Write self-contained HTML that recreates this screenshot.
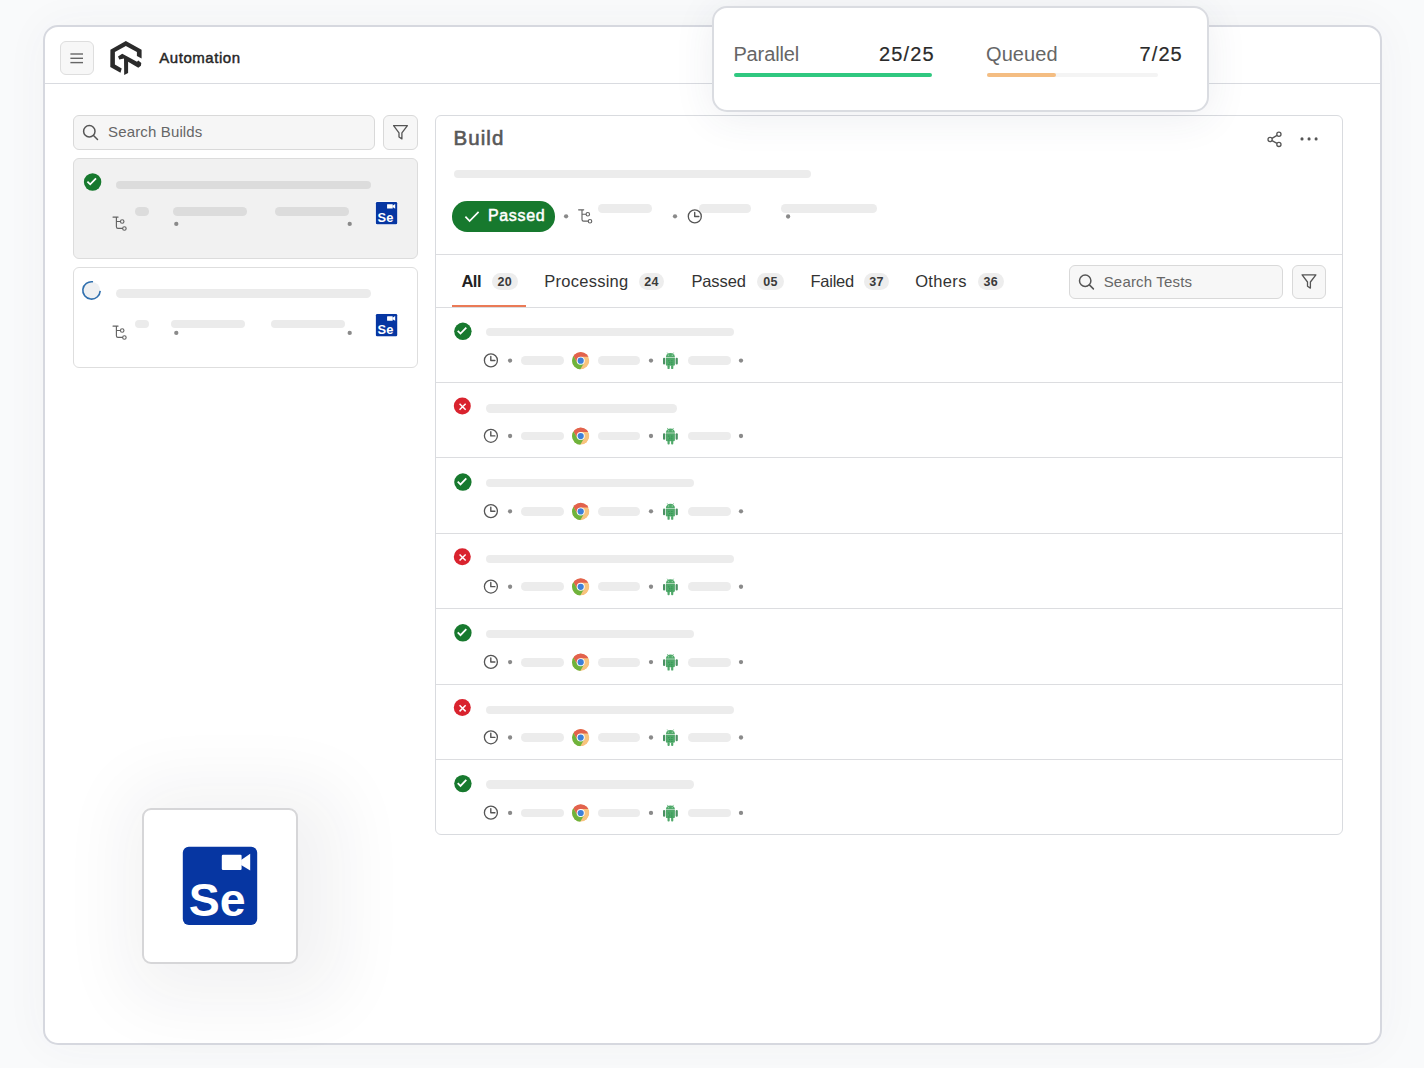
<!DOCTYPE html>
<html><head><meta charset="utf-8"><title>Automation</title>
<style>
html,body{margin:0;padding:0}
body{width:1424px;height:1068px;overflow:hidden;position:relative;background:#f9fafb;font-family:"Liberation Sans", sans-serif}
.b{position:absolute}
.t{position:absolute;white-space:nowrap;line-height:1}
svg.ov{position:absolute;left:0;top:0;width:1424px;height:1068px;pointer-events:none}
</style></head><body>
<div class="b" style="left:43.00px;top:25.00px;width:1339.00px;height:1020.00px;box-sizing:border-box;background:#fff;border:2px solid #d6d8df;border-radius:15px;box-shadow:0 0 45px rgba(60,70,100,0.045)"></div>
<div class="b" style="left:45.00px;top:83.00px;width:1335.00px;height:1.00px;background:#d9dbe0"></div>
<div class="b" style="left:60.00px;top:41.00px;width:33.80px;height:34.00px;box-sizing:border-box;background:#f7f7f7;border:1px solid #dedede;border-radius:6px"></div>
<div class="t" style="left:159.20px;top:50.40px;font-size:15px;font-weight:400;color:#262626;letter-spacing:0.56px;-webkit-text-stroke:0.45px #262626">Automation</div>
<div class="b" style="left:73.00px;top:115.00px;width:301.50px;height:34.60px;box-sizing:border-box;background:#f6f6f6;border:1px solid #d9d9d9;border-radius:6px"></div>
<div class="t" style="left:108.00px;top:124.20px;font-size:15px;font-weight:400;color:#666;letter-spacing:0.15px;">Search Builds</div>
<div class="b" style="left:383.00px;top:115.00px;width:34.50px;height:34.60px;box-sizing:border-box;background:#f7f7f7;border:1px solid #d9d9d9;border-radius:6px"></div>
<div class="b" style="left:73.00px;top:158.00px;width:344.50px;height:100.60px;box-sizing:border-box;background:#f1f1f1;border:1px solid #dcdcdc;border-radius:6px"></div>
<div class="b" style="left:115.60px;top:180.90px;width:255.00px;height:8.40px;background:#dcdcdc;border-radius:4.20px"></div>
<div class="b" style="left:135.00px;top:207.00px;width:14.30px;height:8.50px;background:#dcdcdc;border-radius:4.25px"></div>
<div class="b" style="left:172.90px;top:207.00px;width:74.20px;height:8.50px;background:#dcdcdc;border-radius:4.25px"></div>
<div class="b" style="left:274.90px;top:207.00px;width:74.10px;height:8.50px;background:#dcdcdc;border-radius:4.25px"></div>
<div class="b" style="left:73.00px;top:267.00px;width:344.50px;height:100.60px;box-sizing:border-box;background:#fff;border:1px solid #dedede;border-radius:6px"></div>
<div class="b" style="left:115.60px;top:289.30px;width:255.00px;height:8.70px;background:#ebebeb;border-radius:4.35px"></div>
<div class="b" style="left:134.70px;top:320.00px;width:14.60px;height:8.40px;background:#ebebeb;border-radius:4.20px"></div>
<div class="b" style="left:170.70px;top:320.00px;width:74.40px;height:8.40px;background:#ebebeb;border-radius:4.20px"></div>
<div class="b" style="left:271.20px;top:320.00px;width:73.60px;height:8.40px;background:#ebebeb;border-radius:4.20px"></div>
<div class="b" style="left:435.00px;top:115.00px;width:908.00px;height:720.00px;box-sizing:border-box;background:#fff;border:1px solid #d9dbdf;border-radius:6px"></div>
<div class="t" style="left:453.40px;top:128.05px;font-size:20.5px;font-weight:400;color:#585858;letter-spacing:1.08px;-webkit-text-stroke:0.6px #585858">Build</div>
<div class="b" style="left:453.60px;top:169.90px;width:357.00px;height:8.00px;background:#ececec;border-radius:4.00px"></div>
<div class="b" style="left:451.90px;top:201.30px;width:103.20px;height:30.30px;background:#17792e;border-radius:15.2px"></div>
<div class="t" style="left:487.90px;top:207.56px;font-size:16px;font-weight:400;color:#fff;letter-spacing:0.69px;-webkit-text-stroke:0.5px #fff">Passed</div>
<div class="b" style="left:597.90px;top:204.20px;width:53.70px;height:8.60px;background:#ececec;border-radius:4.30px"></div>
<div class="b" style="left:698.60px;top:204.20px;width:52.40px;height:8.60px;background:#ececec;border-radius:4.30px"></div>
<div class="b" style="left:781.10px;top:204.20px;width:95.90px;height:8.60px;background:#ececec;border-radius:4.30px"></div>
<div class="b" style="left:436.30px;top:254.20px;width:906.00px;height:1.00px;background:#dcdde0"></div>
<div class="t" style="left:461.40px;top:273.13px;font-size:16.5px;font-weight:700;color:#222;letter-spacing:-0.497px;">All</div>
<div class="b" style="left:491.50px;top:272.80px;width:26.40px;height:17.20px;background:#ededed;border-radius:8.6px"></div>
<div class="t" style="left:491.50px;top:272.8px;width:26.40px;height:17.2px;line-height:18.4px;text-align:center;font-size:12.5px;font-weight:700;color:#3a3a3a;letter-spacing:0.3px">20</div>
<div class="t" style="left:544.20px;top:273.13px;font-size:16.5px;font-weight:400;color:#333;letter-spacing:0.268px;">Processing</div>
<div class="b" style="left:638.60px;top:272.80px;width:25.90px;height:17.20px;background:#ededed;border-radius:8.6px"></div>
<div class="t" style="left:638.60px;top:272.8px;width:25.90px;height:17.2px;line-height:18.4px;text-align:center;font-size:12.5px;font-weight:700;color:#3a3a3a;letter-spacing:0.3px">24</div>
<div class="t" style="left:691.40px;top:273.13px;font-size:16.5px;font-weight:400;color:#333;letter-spacing:-0.108px;">Passed</div>
<div class="b" style="left:757.30px;top:272.80px;width:26.60px;height:17.20px;background:#ededed;border-radius:8.6px"></div>
<div class="t" style="left:757.30px;top:272.8px;width:26.60px;height:17.2px;line-height:18.4px;text-align:center;font-size:12.5px;font-weight:700;color:#3a3a3a;letter-spacing:0.3px">05</div>
<div class="t" style="left:810.40px;top:273.13px;font-size:16.5px;font-weight:400;color:#333;letter-spacing:-0.225px;">Failed</div>
<div class="b" style="left:864.40px;top:272.80px;width:24.20px;height:17.20px;background:#ededed;border-radius:8.6px"></div>
<div class="t" style="left:864.40px;top:272.8px;width:24.20px;height:17.2px;line-height:18.4px;text-align:center;font-size:12.5px;font-weight:700;color:#3a3a3a;letter-spacing:0.3px">37</div>
<div class="t" style="left:915.20px;top:273.13px;font-size:16.5px;font-weight:400;color:#333;letter-spacing:0.345px;">Others</div>
<div class="b" style="left:977.50px;top:272.80px;width:26.40px;height:17.20px;background:#ededed;border-radius:8.6px"></div>
<div class="t" style="left:977.50px;top:272.8px;width:26.40px;height:17.2px;line-height:18.4px;text-align:center;font-size:12.5px;font-weight:700;color:#3a3a3a;letter-spacing:0.3px">36</div>
<div class="b" style="left:451.90px;top:305.00px;width:74.60px;height:2.00px;background:#ea7a56"></div>
<div class="b" style="left:436.30px;top:306.80px;width:906.00px;height:1.00px;background:#dcdde0"></div>
<div class="b" style="left:1069.00px;top:264.50px;width:213.50px;height:34.40px;box-sizing:border-box;background:#f7f7f7;border:1px solid #d9d9d9;border-radius:6px"></div>
<div class="t" style="left:1103.70px;top:273.70px;font-size:15px;font-weight:400;color:#666;letter-spacing:0.18px;">Search Tests</div>
<div class="b" style="left:1292.00px;top:264.50px;width:34.00px;height:34.40px;box-sizing:border-box;background:#f7f7f7;border:1px solid #d9d9d9;border-radius:6px"></div>
<div class="b" style="left:485.80px;top:328.00px;width:248.20px;height:8.40px;background:#ececec;border-radius:4.20px"></div>
<div class="b" style="left:521.00px;top:356.30px;width:42.80px;height:8.70px;background:#ececec;border-radius:4.35px"></div>
<div class="b" style="left:597.90px;top:356.30px;width:42.40px;height:8.70px;background:#ececec;border-radius:4.35px"></div>
<div class="b" style="left:688.10px;top:356.30px;width:42.50px;height:8.70px;background:#ececec;border-radius:4.35px"></div>
<div class="b" style="left:436.30px;top:382.08px;width:906.00px;height:1.00px;background:#dcdde0"></div>
<div class="b" style="left:485.80px;top:404.18px;width:191.20px;height:8.40px;background:#ececec;border-radius:4.20px"></div>
<div class="b" style="left:521.00px;top:431.68px;width:42.80px;height:8.70px;background:#ececec;border-radius:4.35px"></div>
<div class="b" style="left:597.90px;top:431.68px;width:42.40px;height:8.70px;background:#ececec;border-radius:4.35px"></div>
<div class="b" style="left:688.10px;top:431.68px;width:42.50px;height:8.70px;background:#ececec;border-radius:4.35px"></div>
<div class="b" style="left:436.30px;top:457.46px;width:906.00px;height:1.00px;background:#dcdde0"></div>
<div class="b" style="left:485.80px;top:478.76px;width:208.20px;height:8.40px;background:#ececec;border-radius:4.20px"></div>
<div class="b" style="left:521.00px;top:507.06px;width:42.80px;height:8.70px;background:#ececec;border-radius:4.35px"></div>
<div class="b" style="left:597.90px;top:507.06px;width:42.40px;height:8.70px;background:#ececec;border-radius:4.35px"></div>
<div class="b" style="left:688.10px;top:507.06px;width:42.50px;height:8.70px;background:#ececec;border-radius:4.35px"></div>
<div class="b" style="left:436.30px;top:532.84px;width:906.00px;height:1.00px;background:#dcdde0"></div>
<div class="b" style="left:485.80px;top:554.94px;width:248.20px;height:8.40px;background:#ececec;border-radius:4.20px"></div>
<div class="b" style="left:521.00px;top:582.44px;width:42.80px;height:8.70px;background:#ececec;border-radius:4.35px"></div>
<div class="b" style="left:597.90px;top:582.44px;width:42.40px;height:8.70px;background:#ececec;border-radius:4.35px"></div>
<div class="b" style="left:688.10px;top:582.44px;width:42.50px;height:8.70px;background:#ececec;border-radius:4.35px"></div>
<div class="b" style="left:436.30px;top:608.22px;width:906.00px;height:1.00px;background:#dcdde0"></div>
<div class="b" style="left:485.80px;top:629.52px;width:208.20px;height:8.40px;background:#ececec;border-radius:4.20px"></div>
<div class="b" style="left:521.00px;top:657.82px;width:42.80px;height:8.70px;background:#ececec;border-radius:4.35px"></div>
<div class="b" style="left:597.90px;top:657.82px;width:42.40px;height:8.70px;background:#ececec;border-radius:4.35px"></div>
<div class="b" style="left:688.10px;top:657.82px;width:42.50px;height:8.70px;background:#ececec;border-radius:4.35px"></div>
<div class="b" style="left:436.30px;top:683.60px;width:906.00px;height:1.00px;background:#dcdde0"></div>
<div class="b" style="left:485.80px;top:705.70px;width:248.20px;height:8.40px;background:#ececec;border-radius:4.20px"></div>
<div class="b" style="left:521.00px;top:733.20px;width:42.80px;height:8.70px;background:#ececec;border-radius:4.35px"></div>
<div class="b" style="left:597.90px;top:733.20px;width:42.40px;height:8.70px;background:#ececec;border-radius:4.35px"></div>
<div class="b" style="left:688.10px;top:733.20px;width:42.50px;height:8.70px;background:#ececec;border-radius:4.35px"></div>
<div class="b" style="left:436.30px;top:758.98px;width:906.00px;height:1.00px;background:#dcdde0"></div>
<div class="b" style="left:485.80px;top:780.28px;width:208.20px;height:8.40px;background:#ececec;border-radius:4.20px"></div>
<div class="b" style="left:521.00px;top:808.58px;width:42.80px;height:8.70px;background:#ececec;border-radius:4.35px"></div>
<div class="b" style="left:597.90px;top:808.58px;width:42.40px;height:8.70px;background:#ececec;border-radius:4.35px"></div>
<div class="b" style="left:688.10px;top:808.58px;width:42.50px;height:8.70px;background:#ececec;border-radius:4.35px"></div>
<div class="b" style="left:142.00px;top:808.00px;width:156.00px;height:156.00px;box-sizing:border-box;background:#fff;border:2px solid #d6d6d8;border-radius:9px;box-shadow:14px 8px 70px 30px rgba(30,35,50,0.06)"></div>
<div class="b" style="left:712.00px;top:6.00px;width:497.00px;height:106.00px;box-sizing:border-box;background:#fff;border:2px solid #dadce1;border-radius:15px;box-shadow:0 6px 40px rgba(50,60,90,0.085)"></div>
<div class="t" style="left:733.40px;top:44.17px;font-size:20px;font-weight:400;color:#666;letter-spacing:-0.12px;">Parallel</div>
<div class="t" style="left:878.90px;top:44.17px;font-size:20px;font-weight:400;color:#2a2a2a;letter-spacing:1.17px;-webkit-text-stroke:0.2px #2a2a2a">25/25</div>
<div class="b" style="left:734.10px;top:72.70px;width:198.30px;height:4.60px;background:#30c880;border-radius:2.30px"></div>
<div class="t" style="left:986.00px;top:44.17px;font-size:20px;font-weight:400;color:#666;letter-spacing:0.09px;">Queued</div>
<div class="t" style="left:1139.50px;top:44.17px;font-size:20px;font-weight:400;color:#2a2a2a;letter-spacing:1.1px;-webkit-text-stroke:0.2px #2a2a2a">7/25</div>
<div class="b" style="left:987.40px;top:72.80px;width:170.20px;height:4.40px;background:#f4f4f4;border-radius:2.20px"></div>
<div class="b" style="left:987.40px;top:72.70px;width:68.90px;height:4.60px;background:#f4bd82;border-radius:2.30px"></div>
<svg class="ov" viewBox="0 0 1424 1068">
<path d="M70.4,54 L83,54" stroke="#666" stroke-width="1.4"/>
<path d="M70.4,58.3 L83,58.3" stroke="#666" stroke-width="1.4"/>
<path d="M70.4,62.6 L83,62.6" stroke="#666" stroke-width="1.4"/>
<polygon points="125.84,40.9 141.6,49.7 141.6,58.4 136.9,55.9 136.9,52.0 125.84,45.9 114.9,52.0 114.9,64.5 121.7,68.5 120.5,72.7 110.3,66.9 110.4,49.7" fill="#2b2b2b"/>
<polygon points="118.0,56.4 122.25,53.8 137.0,61.8 138.3,60.5 141.3,63.1 140.9,65.7 138.3,67.7 128.1,61.8 128.1,72.9 124.2,74.9 124.0,58.5 119.3,59.5" fill="#2b2b2b"/>
<circle cx="89.3" cy="131.3" r="5.7" fill="none" stroke="#555" stroke-width="1.5"/>
<path d="M93.50,135.50 L97.50,139.50" stroke="#555" stroke-width="1.5" stroke-linecap="round"/>
<path d="M393.60,125.60 L407.40,125.60 L401.90,132.80 L401.90,138.90 L399.00,137.00 L399.00,132.80 Z" fill="none" stroke="#555" stroke-width="1.3" stroke-linejoin="round"/>
<circle cx="92.6" cy="182" r="8.7" fill="#17792e"/>
<path d="M87.40,181.60 L90.20,184.30 L96.00,178.40" fill="none" stroke="#fff" stroke-width="1.8" stroke-linecap="butt" stroke-linejoin="miter"/>
<g transform="translate(113.00,216.50)" fill="none" stroke="#636363" stroke-width="1.15" stroke-linecap="round" stroke-linejoin="round"><path d="M0,0.6 L5.1,0.6 M3.4,0.6 L3.4,10.3 Q3.4,11.9 5,11.9 L9.4,11.9 M3.4,5 L7.2,5"/><circle cx="9.2" cy="5" r="1.75"/><circle cx="11.4" cy="12" r="1.75"/></g>
<circle cx="176.30" cy="223.90" r="2.15" fill="#8a8a8a"/>
<circle cx="349.70" cy="223.90" r="2.15" fill="#8a8a8a"/>
<rect x="375.2" y="201.20000000000002" width="22.7" height="23.7" rx="1.9" fill="#fbfbfd"/>
<rect x="375.9" y="201.9" width="21.3" height="22.3" rx="1.3" fill="#0636a2"/>
<rect x="387.07" y="204.19" width="5.67" height="4.35" rx="0.34" fill="#fff"/>
<path d="M392.59,205.65 L395.20,203.88 L395.20,208.71 L392.59,207.08 Z" fill="#fff"/>
<text x="377.59" y="221.68" font-family='"Liberation Sans", sans-serif' font-weight="700" font-size="12.9" fill="#fff">Se</text>
<circle cx="91.5" cy="290.4" r="8.7" fill="#eef0f2"/>
<path d="M93.01,281.83 A8.7,8.7 0 1 0 100.19,290.86" fill="none" stroke="#2f6fae" stroke-width="1.6"/>
<g transform="translate(113.00,325.50)" fill="none" stroke="#636363" stroke-width="1.15" stroke-linecap="round" stroke-linejoin="round"><path d="M0,0.6 L5.1,0.6 M3.4,0.6 L3.4,10.3 Q3.4,11.9 5,11.9 L9.4,11.9 M3.4,5 L7.2,5"/><circle cx="9.2" cy="5" r="1.75"/><circle cx="11.4" cy="12" r="1.75"/></g>
<circle cx="176.30" cy="332.90" r="2.15" fill="#8a8a8a"/>
<circle cx="349.70" cy="332.90" r="2.15" fill="#8a8a8a"/>
<rect x="375.2" y="313.3" width="22.7" height="23.7" rx="1.9" fill="#fbfbfd"/>
<rect x="375.9" y="314.0" width="21.3" height="22.3" rx="1.3" fill="#0636a2"/>
<rect x="387.07" y="316.29" width="5.67" height="4.35" rx="0.34" fill="#fff"/>
<path d="M392.59,317.75 L395.20,315.98 L395.20,320.81 L392.59,319.18 Z" fill="#fff"/>
<text x="377.59" y="333.78" font-family='"Liberation Sans", sans-serif' font-weight="700" font-size="12.9" fill="#fff">Se</text>
<g fill="none" stroke="#555" stroke-width="1.3"><path d="M1272,138.4 L1277,135.4 M1272,140.6 L1277,143.4"/><circle cx="1270.1" cy="139.5" r="2.1"/><circle cx="1278.9" cy="134.3" r="2.1"/><circle cx="1278.9" cy="144.4" r="2.1"/></g>
<circle cx="1302.0" cy="138.9" r="1.55" fill="#555"/>
<circle cx="1309.05" cy="138.9" r="1.55" fill="#555"/>
<circle cx="1316.1" cy="138.9" r="1.55" fill="#555"/>
<path d="M465.4,216.6 L469.6,221.0 L478.6,211.8" fill="none" stroke="#fff" stroke-width="1.7"/>
<circle cx="566.10" cy="216.30" r="2.15" fill="#8a8a8a"/>
<g transform="translate(578.60,209.20)" fill="none" stroke="#636363" stroke-width="1.15" stroke-linecap="round" stroke-linejoin="round"><path d="M0,0.6 L5.1,0.6 M3.4,0.6 L3.4,10.3 Q3.4,11.9 5,11.9 L9.4,11.9 M3.4,5 L7.2,5"/><circle cx="9.2" cy="5" r="1.75"/><circle cx="11.4" cy="12" r="1.75"/></g>
<circle cx="675.00" cy="216.30" r="2.15" fill="#8a8a8a"/>
<circle cx="694.8" cy="216.4" r="6.5" fill="none" stroke="#555" stroke-width="1.3"/>
<path d="M694.70,212.40 L694.70,216.50 L698.80,216.50" fill="none" stroke="#555" stroke-width="1.4" stroke-linecap="round" stroke-linejoin="round"/>
<circle cx="788.10" cy="216.50" r="2.15" fill="#8a8a8a"/>
<circle cx="1085.2" cy="280.7" r="5.7" fill="none" stroke="#555" stroke-width="1.5"/>
<path d="M1089.40,284.90 L1093.40,288.90" stroke="#555" stroke-width="1.5" stroke-linecap="round"/>
<path d="M1302.10,274.80 L1315.90,274.80 L1310.40,282.00 L1310.40,288.10 L1307.50,286.20 L1307.50,282.00 Z" fill="none" stroke="#555" stroke-width="1.3" stroke-linejoin="round"/>
<circle cx="462.9" cy="331.3" r="8.7" fill="#17792e"/>
<path d="M457.70,330.90 L460.50,333.60 L466.30,327.70" fill="none" stroke="#fff" stroke-width="1.8" stroke-linecap="butt" stroke-linejoin="miter"/>
<circle cx="490.9" cy="360.4" r="6.5" fill="none" stroke="#555" stroke-width="1.3"/>
<path d="M490.80,356.40 L490.80,360.50 L494.90,360.50" fill="none" stroke="#555" stroke-width="1.4" stroke-linecap="round" stroke-linejoin="round"/>
<circle cx="510.10" cy="360.60" r="2.15" fill="#8a8a8a"/>
<g transform="translate(580.70,360.70)"><clipPath id="cc5807_3607"><circle r="8.7"/></clipPath><g clip-path="url(#cc5807_3607)"><circle r="8.7" fill="#f8c37d"/><polygon points="-3.46,2.00 -18.46,-23.98 -30.00,-30.00 30.00,-30.00 30.00,-4.00 0.00,-4.00 0.00,0.00" fill="#e2624d"/><polygon points="3.46,2.00 -11.54,27.98 -30.00,30.00 -30.00,-6.00 -18.46,-23.98 -3.46,2.00 0.00,0.00" fill="#6fb33b"/></g><circle r="4.0" fill="#fff"/><circle r="3.1" fill="#3e80d8"/></g>
<circle cx="651.00" cy="360.60" r="2.15" fill="#8a8a8a"/>
<g transform="translate(670.40,352.30)"><path d="M-3.2,0.3 L-2.1,1.8 M3.2,0.3 L2.1,1.8" stroke="#50a96a" stroke-width="0.7" fill="none"/><path d="M-4.5,5 A4.5,4.2 0 0 1 4.5,5 Z" fill="#50a96a"/><path d="M-4.5,5.5 L4.5,5.5 L4.5,12.3 Q4.5,13.5 3.3,13.5 L-3.3,13.5 Q-4.5,13.5 -4.5,12.3 Z" fill="#50a96a"/><rect x="-7.4" y="5.5" width="2.2" height="6.6" rx="1" fill="#4b9163"/><rect x="5.2" y="5.5" width="2.2" height="6.6" rx="1" fill="#4b9163"/><rect x="-2.9" y="13" width="2.2" height="3.8" rx="0.9" fill="#50a96a"/><rect x="0.7" y="13" width="2.2" height="3.8" rx="0.9" fill="#50a96a"/><circle cx="-1.9" cy="3" r="0.7" fill="#8fd0a0"/><circle cx="1.9" cy="3" r="0.7" fill="#8fd0a0"/><circle cx="-1.5" cy="8.4" r="0.55" fill="#1f8a45"/><circle cx="1.5" cy="8.4" r="0.55" fill="#1f8a45"/><circle cx="-0.6" cy="10.4" r="0.55" fill="#1f8a45"/><circle cx="1.5" cy="10.4" r="0.55" fill="#1f8a45"/><circle cx="-1.5" cy="12.3" r="0.55" fill="#1f8a45"/><circle cx="1.5" cy="12.3" r="0.55" fill="#1f8a45"/></g>
<circle cx="741.00" cy="360.60" r="2.15" fill="#8a8a8a"/>
<circle cx="462.3" cy="405.98" r="8.5" fill="#d9232e"/>
<path d="M459.55,403.73 L465.65,409.83 M465.65,403.73 L459.55,409.83" fill="none" stroke="#fff" stroke-width="1.5" stroke-linecap="butt"/>
<circle cx="490.9" cy="435.78" r="6.5" fill="none" stroke="#555" stroke-width="1.3"/>
<path d="M490.80,431.78 L490.80,435.88 L494.90,435.88" fill="none" stroke="#555" stroke-width="1.4" stroke-linecap="round" stroke-linejoin="round"/>
<circle cx="510.10" cy="435.98" r="2.15" fill="#8a8a8a"/>
<g transform="translate(580.70,436.08)"><clipPath id="cc5807_4360"><circle r="8.7"/></clipPath><g clip-path="url(#cc5807_4360)"><circle r="8.7" fill="#f8c37d"/><polygon points="-3.46,2.00 -18.46,-23.98 -30.00,-30.00 30.00,-30.00 30.00,-4.00 0.00,-4.00 0.00,0.00" fill="#e2624d"/><polygon points="3.46,2.00 -11.54,27.98 -30.00,30.00 -30.00,-6.00 -18.46,-23.98 -3.46,2.00 0.00,0.00" fill="#6fb33b"/></g><circle r="4.0" fill="#fff"/><circle r="3.1" fill="#3e80d8"/></g>
<circle cx="651.00" cy="435.98" r="2.15" fill="#8a8a8a"/>
<g transform="translate(670.40,427.68)"><path d="M-3.2,0.3 L-2.1,1.8 M3.2,0.3 L2.1,1.8" stroke="#50a96a" stroke-width="0.7" fill="none"/><path d="M-4.5,5 A4.5,4.2 0 0 1 4.5,5 Z" fill="#50a96a"/><path d="M-4.5,5.5 L4.5,5.5 L4.5,12.3 Q4.5,13.5 3.3,13.5 L-3.3,13.5 Q-4.5,13.5 -4.5,12.3 Z" fill="#50a96a"/><rect x="-7.4" y="5.5" width="2.2" height="6.6" rx="1" fill="#4b9163"/><rect x="5.2" y="5.5" width="2.2" height="6.6" rx="1" fill="#4b9163"/><rect x="-2.9" y="13" width="2.2" height="3.8" rx="0.9" fill="#50a96a"/><rect x="0.7" y="13" width="2.2" height="3.8" rx="0.9" fill="#50a96a"/><circle cx="-1.9" cy="3" r="0.7" fill="#8fd0a0"/><circle cx="1.9" cy="3" r="0.7" fill="#8fd0a0"/><circle cx="-1.5" cy="8.4" r="0.55" fill="#1f8a45"/><circle cx="1.5" cy="8.4" r="0.55" fill="#1f8a45"/><circle cx="-0.6" cy="10.4" r="0.55" fill="#1f8a45"/><circle cx="1.5" cy="10.4" r="0.55" fill="#1f8a45"/><circle cx="-1.5" cy="12.3" r="0.55" fill="#1f8a45"/><circle cx="1.5" cy="12.3" r="0.55" fill="#1f8a45"/></g>
<circle cx="741.00" cy="435.98" r="2.15" fill="#8a8a8a"/>
<circle cx="462.9" cy="482.06" r="8.7" fill="#17792e"/>
<path d="M457.70,481.66 L460.50,484.36 L466.30,478.46" fill="none" stroke="#fff" stroke-width="1.8" stroke-linecap="butt" stroke-linejoin="miter"/>
<circle cx="490.9" cy="511.16" r="6.5" fill="none" stroke="#555" stroke-width="1.3"/>
<path d="M490.80,507.16 L490.80,511.26 L494.90,511.26" fill="none" stroke="#555" stroke-width="1.4" stroke-linecap="round" stroke-linejoin="round"/>
<circle cx="510.10" cy="511.36" r="2.15" fill="#8a8a8a"/>
<g transform="translate(580.70,511.46)"><clipPath id="cc5807_5114"><circle r="8.7"/></clipPath><g clip-path="url(#cc5807_5114)"><circle r="8.7" fill="#f8c37d"/><polygon points="-3.46,2.00 -18.46,-23.98 -30.00,-30.00 30.00,-30.00 30.00,-4.00 0.00,-4.00 0.00,0.00" fill="#e2624d"/><polygon points="3.46,2.00 -11.54,27.98 -30.00,30.00 -30.00,-6.00 -18.46,-23.98 -3.46,2.00 0.00,0.00" fill="#6fb33b"/></g><circle r="4.0" fill="#fff"/><circle r="3.1" fill="#3e80d8"/></g>
<circle cx="651.00" cy="511.36" r="2.15" fill="#8a8a8a"/>
<g transform="translate(670.40,503.06)"><path d="M-3.2,0.3 L-2.1,1.8 M3.2,0.3 L2.1,1.8" stroke="#50a96a" stroke-width="0.7" fill="none"/><path d="M-4.5,5 A4.5,4.2 0 0 1 4.5,5 Z" fill="#50a96a"/><path d="M-4.5,5.5 L4.5,5.5 L4.5,12.3 Q4.5,13.5 3.3,13.5 L-3.3,13.5 Q-4.5,13.5 -4.5,12.3 Z" fill="#50a96a"/><rect x="-7.4" y="5.5" width="2.2" height="6.6" rx="1" fill="#4b9163"/><rect x="5.2" y="5.5" width="2.2" height="6.6" rx="1" fill="#4b9163"/><rect x="-2.9" y="13" width="2.2" height="3.8" rx="0.9" fill="#50a96a"/><rect x="0.7" y="13" width="2.2" height="3.8" rx="0.9" fill="#50a96a"/><circle cx="-1.9" cy="3" r="0.7" fill="#8fd0a0"/><circle cx="1.9" cy="3" r="0.7" fill="#8fd0a0"/><circle cx="-1.5" cy="8.4" r="0.55" fill="#1f8a45"/><circle cx="1.5" cy="8.4" r="0.55" fill="#1f8a45"/><circle cx="-0.6" cy="10.4" r="0.55" fill="#1f8a45"/><circle cx="1.5" cy="10.4" r="0.55" fill="#1f8a45"/><circle cx="-1.5" cy="12.3" r="0.55" fill="#1f8a45"/><circle cx="1.5" cy="12.3" r="0.55" fill="#1f8a45"/></g>
<circle cx="741.00" cy="511.36" r="2.15" fill="#8a8a8a"/>
<circle cx="462.3" cy="556.74" r="8.5" fill="#d9232e"/>
<path d="M459.55,554.49 L465.65,560.59 M465.65,554.49 L459.55,560.59" fill="none" stroke="#fff" stroke-width="1.5" stroke-linecap="butt"/>
<circle cx="490.9" cy="586.54" r="6.5" fill="none" stroke="#555" stroke-width="1.3"/>
<path d="M490.80,582.54 L490.80,586.64 L494.90,586.64" fill="none" stroke="#555" stroke-width="1.4" stroke-linecap="round" stroke-linejoin="round"/>
<circle cx="510.10" cy="586.74" r="2.15" fill="#8a8a8a"/>
<g transform="translate(580.70,586.84)"><clipPath id="cc5807_5868"><circle r="8.7"/></clipPath><g clip-path="url(#cc5807_5868)"><circle r="8.7" fill="#f8c37d"/><polygon points="-3.46,2.00 -18.46,-23.98 -30.00,-30.00 30.00,-30.00 30.00,-4.00 0.00,-4.00 0.00,0.00" fill="#e2624d"/><polygon points="3.46,2.00 -11.54,27.98 -30.00,30.00 -30.00,-6.00 -18.46,-23.98 -3.46,2.00 0.00,0.00" fill="#6fb33b"/></g><circle r="4.0" fill="#fff"/><circle r="3.1" fill="#3e80d8"/></g>
<circle cx="651.00" cy="586.74" r="2.15" fill="#8a8a8a"/>
<g transform="translate(670.40,578.44)"><path d="M-3.2,0.3 L-2.1,1.8 M3.2,0.3 L2.1,1.8" stroke="#50a96a" stroke-width="0.7" fill="none"/><path d="M-4.5,5 A4.5,4.2 0 0 1 4.5,5 Z" fill="#50a96a"/><path d="M-4.5,5.5 L4.5,5.5 L4.5,12.3 Q4.5,13.5 3.3,13.5 L-3.3,13.5 Q-4.5,13.5 -4.5,12.3 Z" fill="#50a96a"/><rect x="-7.4" y="5.5" width="2.2" height="6.6" rx="1" fill="#4b9163"/><rect x="5.2" y="5.5" width="2.2" height="6.6" rx="1" fill="#4b9163"/><rect x="-2.9" y="13" width="2.2" height="3.8" rx="0.9" fill="#50a96a"/><rect x="0.7" y="13" width="2.2" height="3.8" rx="0.9" fill="#50a96a"/><circle cx="-1.9" cy="3" r="0.7" fill="#8fd0a0"/><circle cx="1.9" cy="3" r="0.7" fill="#8fd0a0"/><circle cx="-1.5" cy="8.4" r="0.55" fill="#1f8a45"/><circle cx="1.5" cy="8.4" r="0.55" fill="#1f8a45"/><circle cx="-0.6" cy="10.4" r="0.55" fill="#1f8a45"/><circle cx="1.5" cy="10.4" r="0.55" fill="#1f8a45"/><circle cx="-1.5" cy="12.3" r="0.55" fill="#1f8a45"/><circle cx="1.5" cy="12.3" r="0.55" fill="#1f8a45"/></g>
<circle cx="741.00" cy="586.74" r="2.15" fill="#8a8a8a"/>
<circle cx="462.9" cy="632.82" r="8.7" fill="#17792e"/>
<path d="M457.70,632.42 L460.50,635.12 L466.30,629.22" fill="none" stroke="#fff" stroke-width="1.8" stroke-linecap="butt" stroke-linejoin="miter"/>
<circle cx="490.9" cy="661.92" r="6.5" fill="none" stroke="#555" stroke-width="1.3"/>
<path d="M490.80,657.92 L490.80,662.02 L494.90,662.02" fill="none" stroke="#555" stroke-width="1.4" stroke-linecap="round" stroke-linejoin="round"/>
<circle cx="510.10" cy="662.12" r="2.15" fill="#8a8a8a"/>
<g transform="translate(580.70,662.22)"><clipPath id="cc5807_6622"><circle r="8.7"/></clipPath><g clip-path="url(#cc5807_6622)"><circle r="8.7" fill="#f8c37d"/><polygon points="-3.46,2.00 -18.46,-23.98 -30.00,-30.00 30.00,-30.00 30.00,-4.00 0.00,-4.00 0.00,0.00" fill="#e2624d"/><polygon points="3.46,2.00 -11.54,27.98 -30.00,30.00 -30.00,-6.00 -18.46,-23.98 -3.46,2.00 0.00,0.00" fill="#6fb33b"/></g><circle r="4.0" fill="#fff"/><circle r="3.1" fill="#3e80d8"/></g>
<circle cx="651.00" cy="662.12" r="2.15" fill="#8a8a8a"/>
<g transform="translate(670.40,653.82)"><path d="M-3.2,0.3 L-2.1,1.8 M3.2,0.3 L2.1,1.8" stroke="#50a96a" stroke-width="0.7" fill="none"/><path d="M-4.5,5 A4.5,4.2 0 0 1 4.5,5 Z" fill="#50a96a"/><path d="M-4.5,5.5 L4.5,5.5 L4.5,12.3 Q4.5,13.5 3.3,13.5 L-3.3,13.5 Q-4.5,13.5 -4.5,12.3 Z" fill="#50a96a"/><rect x="-7.4" y="5.5" width="2.2" height="6.6" rx="1" fill="#4b9163"/><rect x="5.2" y="5.5" width="2.2" height="6.6" rx="1" fill="#4b9163"/><rect x="-2.9" y="13" width="2.2" height="3.8" rx="0.9" fill="#50a96a"/><rect x="0.7" y="13" width="2.2" height="3.8" rx="0.9" fill="#50a96a"/><circle cx="-1.9" cy="3" r="0.7" fill="#8fd0a0"/><circle cx="1.9" cy="3" r="0.7" fill="#8fd0a0"/><circle cx="-1.5" cy="8.4" r="0.55" fill="#1f8a45"/><circle cx="1.5" cy="8.4" r="0.55" fill="#1f8a45"/><circle cx="-0.6" cy="10.4" r="0.55" fill="#1f8a45"/><circle cx="1.5" cy="10.4" r="0.55" fill="#1f8a45"/><circle cx="-1.5" cy="12.3" r="0.55" fill="#1f8a45"/><circle cx="1.5" cy="12.3" r="0.55" fill="#1f8a45"/></g>
<circle cx="741.00" cy="662.12" r="2.15" fill="#8a8a8a"/>
<circle cx="462.3" cy="707.5" r="8.5" fill="#d9232e"/>
<path d="M459.55,705.25 L465.65,711.35 M465.65,705.25 L459.55,711.35" fill="none" stroke="#fff" stroke-width="1.5" stroke-linecap="butt"/>
<circle cx="490.9" cy="737.3" r="6.5" fill="none" stroke="#555" stroke-width="1.3"/>
<path d="M490.80,733.30 L490.80,737.40 L494.90,737.40" fill="none" stroke="#555" stroke-width="1.4" stroke-linecap="round" stroke-linejoin="round"/>
<circle cx="510.10" cy="737.50" r="2.15" fill="#8a8a8a"/>
<g transform="translate(580.70,737.60)"><clipPath id="cc5807_7375"><circle r="8.7"/></clipPath><g clip-path="url(#cc5807_7375)"><circle r="8.7" fill="#f8c37d"/><polygon points="-3.46,2.00 -18.46,-23.98 -30.00,-30.00 30.00,-30.00 30.00,-4.00 0.00,-4.00 0.00,0.00" fill="#e2624d"/><polygon points="3.46,2.00 -11.54,27.98 -30.00,30.00 -30.00,-6.00 -18.46,-23.98 -3.46,2.00 0.00,0.00" fill="#6fb33b"/></g><circle r="4.0" fill="#fff"/><circle r="3.1" fill="#3e80d8"/></g>
<circle cx="651.00" cy="737.50" r="2.15" fill="#8a8a8a"/>
<g transform="translate(670.40,729.20)"><path d="M-3.2,0.3 L-2.1,1.8 M3.2,0.3 L2.1,1.8" stroke="#50a96a" stroke-width="0.7" fill="none"/><path d="M-4.5,5 A4.5,4.2 0 0 1 4.5,5 Z" fill="#50a96a"/><path d="M-4.5,5.5 L4.5,5.5 L4.5,12.3 Q4.5,13.5 3.3,13.5 L-3.3,13.5 Q-4.5,13.5 -4.5,12.3 Z" fill="#50a96a"/><rect x="-7.4" y="5.5" width="2.2" height="6.6" rx="1" fill="#4b9163"/><rect x="5.2" y="5.5" width="2.2" height="6.6" rx="1" fill="#4b9163"/><rect x="-2.9" y="13" width="2.2" height="3.8" rx="0.9" fill="#50a96a"/><rect x="0.7" y="13" width="2.2" height="3.8" rx="0.9" fill="#50a96a"/><circle cx="-1.9" cy="3" r="0.7" fill="#8fd0a0"/><circle cx="1.9" cy="3" r="0.7" fill="#8fd0a0"/><circle cx="-1.5" cy="8.4" r="0.55" fill="#1f8a45"/><circle cx="1.5" cy="8.4" r="0.55" fill="#1f8a45"/><circle cx="-0.6" cy="10.4" r="0.55" fill="#1f8a45"/><circle cx="1.5" cy="10.4" r="0.55" fill="#1f8a45"/><circle cx="-1.5" cy="12.3" r="0.55" fill="#1f8a45"/><circle cx="1.5" cy="12.3" r="0.55" fill="#1f8a45"/></g>
<circle cx="741.00" cy="737.50" r="2.15" fill="#8a8a8a"/>
<circle cx="462.9" cy="783.58" r="8.7" fill="#17792e"/>
<path d="M457.70,783.18 L460.50,785.88 L466.30,779.98" fill="none" stroke="#fff" stroke-width="1.8" stroke-linecap="butt" stroke-linejoin="miter"/>
<circle cx="490.9" cy="812.68" r="6.5" fill="none" stroke="#555" stroke-width="1.3"/>
<path d="M490.80,808.68 L490.80,812.78 L494.90,812.78" fill="none" stroke="#555" stroke-width="1.4" stroke-linecap="round" stroke-linejoin="round"/>
<circle cx="510.10" cy="812.88" r="2.15" fill="#8a8a8a"/>
<g transform="translate(580.70,812.98)"><clipPath id="cc5807_8129"><circle r="8.7"/></clipPath><g clip-path="url(#cc5807_8129)"><circle r="8.7" fill="#f8c37d"/><polygon points="-3.46,2.00 -18.46,-23.98 -30.00,-30.00 30.00,-30.00 30.00,-4.00 0.00,-4.00 0.00,0.00" fill="#e2624d"/><polygon points="3.46,2.00 -11.54,27.98 -30.00,30.00 -30.00,-6.00 -18.46,-23.98 -3.46,2.00 0.00,0.00" fill="#6fb33b"/></g><circle r="4.0" fill="#fff"/><circle r="3.1" fill="#3e80d8"/></g>
<circle cx="651.00" cy="812.88" r="2.15" fill="#8a8a8a"/>
<g transform="translate(670.40,804.58)"><path d="M-3.2,0.3 L-2.1,1.8 M3.2,0.3 L2.1,1.8" stroke="#50a96a" stroke-width="0.7" fill="none"/><path d="M-4.5,5 A4.5,4.2 0 0 1 4.5,5 Z" fill="#50a96a"/><path d="M-4.5,5.5 L4.5,5.5 L4.5,12.3 Q4.5,13.5 3.3,13.5 L-3.3,13.5 Q-4.5,13.5 -4.5,12.3 Z" fill="#50a96a"/><rect x="-7.4" y="5.5" width="2.2" height="6.6" rx="1" fill="#4b9163"/><rect x="5.2" y="5.5" width="2.2" height="6.6" rx="1" fill="#4b9163"/><rect x="-2.9" y="13" width="2.2" height="3.8" rx="0.9" fill="#50a96a"/><rect x="0.7" y="13" width="2.2" height="3.8" rx="0.9" fill="#50a96a"/><circle cx="-1.9" cy="3" r="0.7" fill="#8fd0a0"/><circle cx="1.9" cy="3" r="0.7" fill="#8fd0a0"/><circle cx="-1.5" cy="8.4" r="0.55" fill="#1f8a45"/><circle cx="1.5" cy="8.4" r="0.55" fill="#1f8a45"/><circle cx="-0.6" cy="10.4" r="0.55" fill="#1f8a45"/><circle cx="1.5" cy="10.4" r="0.55" fill="#1f8a45"/><circle cx="-1.5" cy="12.3" r="0.55" fill="#1f8a45"/><circle cx="1.5" cy="12.3" r="0.55" fill="#1f8a45"/></g>
<circle cx="741.00" cy="812.88" r="2.15" fill="#8a8a8a"/>
<rect x="182.8" y="846.8" width="74.4" height="78.1" rx="6" fill="#0636a2"/>
<rect x="221.80" y="854.80" width="19.80" height="15.20" rx="1.20" fill="#fff"/>
<path d="M241.10,859.90 L250.20,853.70 L250.20,870.60 L241.10,864.90 Z" fill="#fff"/>
<text x="188.70" y="915.90" font-family='"Liberation Sans", sans-serif' font-weight="700" font-size="46.5" fill="#fff">Se</text>
</svg>
</body></html>
